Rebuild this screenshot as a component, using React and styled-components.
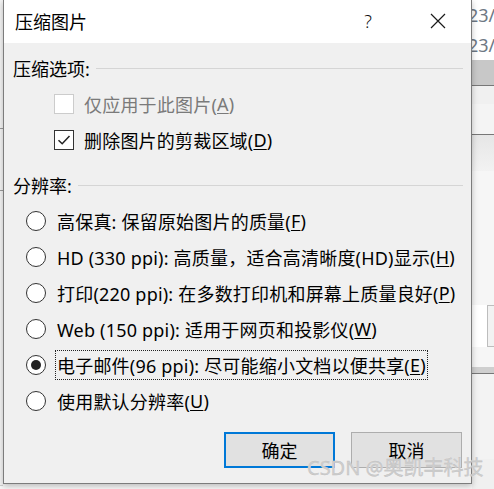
import React from 'react';
import styled, { createGlobalStyle } from 'styled-components';

const GlobalStyle = createGlobalStyle`
    html, body {
        margin: 0;
        padding: 0;
        background: #ffffff;
    }
    body {
        font-family: "Noto Sans", "Noto Sans CJK SC", sans-serif;
    }
`;

const RESOLUTIONS = [
    { id: 'hifi', label: '高保真: 保留原始图片的质量', key: 'F' },
    { id: 'hd', label: 'HD (330 ppi): 高质量，适合高清晰度(HD)显示', key: 'H' },
    { id: 'print', label: '打印(220 ppi): 在多数打印机和屏幕上质量良好', key: 'P' },
    { id: 'web', label: 'Web (150 ppi): 适用于网页和投影仪', key: 'W' },
    { id: 'email', label: '电子邮件(96 ppi): 尽可能缩小文档以便共享', key: 'E' },
    { id: 'default', label: '使用默认分辨率', key: 'U' }
];

const CloseIcon = () => (
    <svg width="16" height="16" viewBox="0 0 16 16">
        <path d="M1 1 L15 15 M15 1 L1 15" stroke="#1a1a1a" strokeWidth="1.2" fill="none" />
    </svg>
);

const CheckMark = () => (
    <svg width="14" height="14" viewBox="0 0 14 14">
        <path d="M1.5 7.2 L5.2 10.8 L12.5 3" stroke="#222" strokeWidth="1.5" fill="none" />
    </svg>
);

export default () => {
    const selected = 'email';

    return (
        <Page>
            <GlobalStyle />
            <LeftStrip>
                <StripLine $top={128} />
                <StripLine $top={190} />
            </LeftStrip>
            <Dialog>
                <TitleBar>
                    <Title>压缩图片</Title>
                    <TitleButtons>
                        <Help>?</Help>
                        <CloseButton>
                            <CloseIcon />
                        </CloseButton>
                    </TitleButtons>
                </TitleBar>
                <Body>
                    <GroupHeader>
                        <GroupLabel>压缩选项:</GroupLabel>
                        <GroupLine />
                    </GroupHeader>
                    <CheckRow>
                        <CheckBox $disabled />
                        <OptionLabel $disabled>
                            仅应用于此图片(<u>A</u>)
                        </OptionLabel>
                    </CheckRow>
                    <CheckRow>
                        <CheckBox>
                            <CheckMark />
                        </CheckBox>
                        <OptionLabel>
                            删除图片的剪裁区域(<u>D</u>)
                        </OptionLabel>
                    </CheckRow>

                    <GroupHeader $spaced>
                        <GroupLabel>分辨率:</GroupLabel>
                        <GroupLine />
                    </GroupHeader>
                    {RESOLUTIONS.map(item => (
                        <RadioRow key={item.id}>
                            <Radio $checked={item.id === selected} />
                            <OptionLabel $focused={item.id === selected}>
                                {item.label}(<u>{item.key}</u>)
                            </OptionLabel>
                        </RadioRow>
                    ))}

                    <ButtonRow>
                        <DialogButton $primary>确定</DialogButton>
                        <DialogButton>取消</DialogButton>
                    </ButtonRow>
                </Body>
            </Dialog>
            <RightStrip>
                <BgText>23/</BgText>
                <BgText>23/</BgText>
                <BgBand $height={26} $color="#c8c8c8" />
                <BgBand $height={18} $color="#f0f0f0" $line />
                <BgBand $height={30} $color="#f4f4f4" />
                <BgBand $height={36} $gradient $line />
                <BgBand $height={136} $color="#f6f6f6" />
                <BgBox />
                <BgBand $height={20} $color="#f6f6f6" />
                <BgBand $height={6} $color="#cfcfcf" />
                <BgBand $height={86} $color="#f3f3f3" $line />
                <BgBand $height={30} $color="#f0f0f0" />
            </RightStrip>
            <Watermark>CSDN @奥凯丰科技</Watermark>
        </Page>
    );
};

const Page = styled.div`
    position: relative;
    display: flex;
    width: 494px;
    height: 489px;
    overflow: hidden;
    background: #f7f7f7;
`;

const LeftStrip = styled.div`
    position: relative;
    flex-shrink: 0;
    width: 3px;
    height: 485px;
    background: #f4f4f4;
    border-bottom: 1px solid #d0d0d0;
`;

const StripLine = styled.div`
    position: absolute;
    left: 0;
    right: 0;
    top: ${p => p.$top}px;
    height: 1px;
    background: #9a9a9a;
`;

const Dialog = styled.div`
    display: flex;
    flex-direction: column;
    flex-shrink: 0;
    width: 467px;
    height: 483px;
    border: 1px solid #7c7c7c;
    border-top: none;
    background: #f0f0f0;
    box-shadow: 0 2px 6px rgba(0, 0, 0, 0.25);
    z-index: 1;
`;

const TitleBar = styled.div`
    display: flex;
    align-items: center;
    justify-content: space-between;
    height: 43px;
    padding-left: 11px;
    background: #ffffff;
`;

const Title = styled.div`
    font-size: 18px;
    color: #000;
    margin-top: -1px;
`;

const TitleButtons = styled.div`
    display: flex;
    align-items: center;
`;

const Help = styled.div`
    width: 74px;
    text-align: center;
    font-family: "Noto Sans", sans-serif;
    font-size: 18px;
    font-weight: 300;
    color: #111;
    margin-top: -2px;
`;

const CloseButton = styled.div`
    display: flex;
    align-items: center;
    justify-content: center;
    width: 66px;
    margin-top: -1px;
`;

const Body = styled.div`
    display: flex;
    flex-direction: column;
    flex: 1;
    padding: 7px 8px 0 9px;
`;

const GroupHeader = styled.div`
    display: flex;
    align-items: center;
    height: 36px;
    margin-top: ${p => (p.$spaced ? '9px' : '0')};
`;

const GroupLabel = styled.div`
    font-size: 18px;
    color: #000;
`;

const GroupLine = styled.div`
    flex: 1;
    height: 1px;
    margin-left: 6px;
    margin-top: 1px;
    background: #d5d5d5;
`;

const CheckRow = styled.div`
    display: flex;
    align-items: center;
    height: 36px;
    padding-left: 41px;
`;

const CheckBox = styled.div`
    display: flex;
    align-items: center;
    justify-content: center;
    box-sizing: border-box;
    width: 20px;
    height: 20px;
    background: #ffffff;
    border: 1px solid ${p => (p.$disabled ? '#cccccc' : '#333333')};
    margin-right: 8px;
`;

const RadioRow = styled.div`
    display: flex;
    align-items: center;
    height: 36px;
    padding-left: 13px;
`;

const Radio = styled.div`
    position: relative;
    box-sizing: border-box;
    width: 20px;
    height: 20px;
    border-radius: 50%;
    border: 1px solid #333333;
    background: #ffffff;
    margin-right: 9px;

    &::after {
        content: '';
        display: ${p => (p.$checked ? 'block' : 'none')};
        position: absolute;
        left: 4px;
        top: 4px;
        width: 10px;
        height: 10px;
        border-radius: 50%;
        background: #222222;
    }
`;

const OptionLabel = styled.div`
    display: flex;
    align-items: center;
    height: 28px;
    padding: 0 1px;
    border: 1px dotted ${p => (p.$focused ? '#222' : 'transparent')};
    font-size: 18px;
    letter-spacing: 0.2px;
    white-space: nowrap;
    color: ${p => (p.$disabled ? '#7a7a7a' : '#000')};

    u {
        text-underline-offset: 2px;
    }
`;

const ButtonRow = styled.div`
    display: flex;
    justify-content: flex-end;
    gap: 16px;
    margin-top: 13px;
    padding-right: 1px;
`;

const DialogButton = styled.div`
    display: flex;
    align-items: center;
    justify-content: center;
    box-sizing: border-box;
    width: 111px;
    height: 36px;
    background: #e1e1e1;
    border: ${p => (p.$primary ? '2px solid #0078d7' : '1px solid #adadad')};
    font-size: 18px;
    color: #000;
`;

const RightStrip = styled.div`
    display: flex;
    flex-direction: column;
    flex: 1;
    min-width: 0;
    overflow: hidden;
    background: #ffffff;
`;

const BgText = styled.div`
    height: 30px;
    padding-top: 2px;
    box-sizing: border-box;
    margin-left: -4px;
    font-family: "Noto Sans", sans-serif;
    font-size: 18px;
    line-height: 26px;
    color: #6e7884;
    white-space: nowrap;
`;

const BgBand = styled.div`
    height: ${p => p.$height}px;
    background: ${p => (p.$gradient ? 'linear-gradient(#e6e6e6, #f2f2f2)' : p.$color)};
    border-top: ${p => (p.$line ? '1px solid #777' : 'none')};
`;

const BgBox = styled.div`
    height: 40px;
    margin-left: 15px;
    border: 1px solid #bdbdbd;
    border-right: none;
    background: #f2f2f2;
`;

const Watermark = styled.div`
    position: absolute;
    left: 307px;
    top: 452px;
    font-family: "Noto Sans", "Noto Sans CJK SC", sans-serif;
    font-size: 20px;
    color: #cfcfcf;
    -webkit-text-stroke: 0.4px #bdbdbd;
    text-shadow: 0 0 1px #ffffff;
    white-space: nowrap;
    z-index: 2;
`;
